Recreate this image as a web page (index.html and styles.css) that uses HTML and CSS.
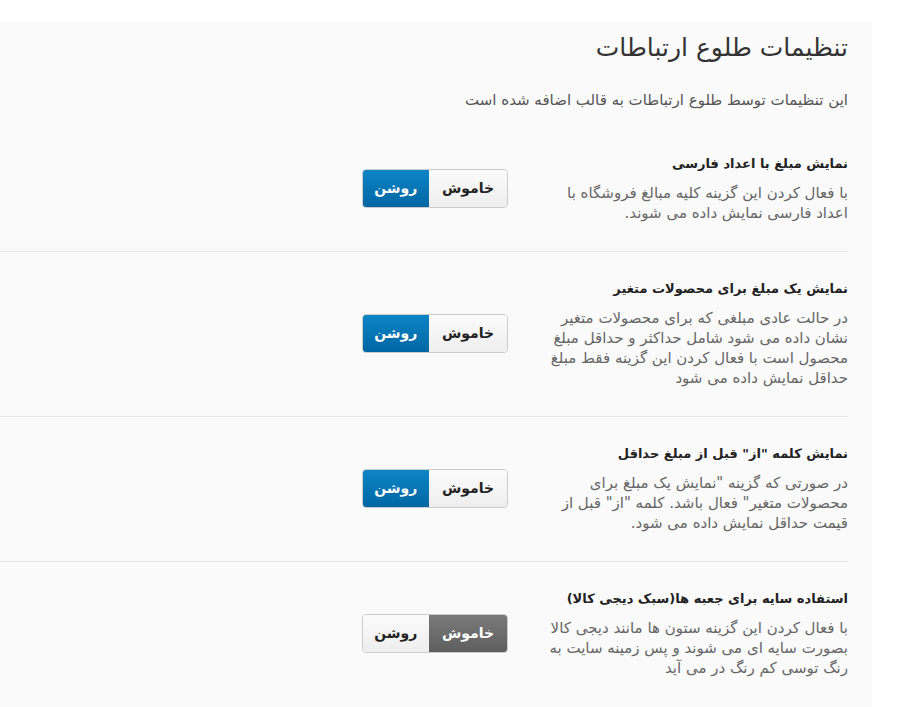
FILE: index.html
```html
<!DOCTYPE html>
<html lang="fa" dir="rtl">
<head>
    <meta charset="UTF-8">
    <meta name="viewport" content="width=device-width, initial-scale=1.0">
    <title>تنظیمات طلوع ارتباطات</title>
    <link rel="stylesheet" href="styles.css">
</head>
<body>
    <div class="panel">
        <h1 class="panel-title">تنظیمات طلوع ارتباطات</h1>
        <p class="panel-desc">این تنظیمات توسط طلوع ارتباطات به قالب اضافه شده است</p>

        <div class="option">
            <div class="option-text">
                <h3>نمایش مبلغ با اعداد فارسی</h3>
                <p>با فعال کردن این گزینه کلیه مبالغ فروشگاه با اعداد فارسی نمایش داده می شوند.</p>
            </div>
            <div class="switch">
                <button class="switch-btn">خاموش</button>
                <button class="switch-btn on">روشن</button>
            </div>
        </div>

        <div class="option">
            <div class="option-text">
                <h3>نمایش یک مبلغ برای محصولات متغیر</h3>
                <p>در حالت عادی مبلغی که برای محصولات متغیر نشان داده می شود شامل حداکثر و حداقل مبلغ محصول است با فعال کردن این گزینه فقط مبلغ حداقل نمایش داده می شود</p>
            </div>
            <div class="switch">
                <button class="switch-btn">خاموش</button>
                <button class="switch-btn on">روشن</button>
            </div>
        </div>

        <div class="option">
            <div class="option-text">
                <h3>نمایش کلمه "از" قبل از مبلغ حداقل</h3>
                <p>در صورتی که گزینه "نمایش یک مبلغ برای محصولات متغیر" فعال باشد. کلمه "از" قبل از قیمت حداقل نمایش داده می شود.</p>
            </div>
            <div class="switch">
                <button class="switch-btn">خاموش</button>
                <button class="switch-btn on">روشن</button>
            </div>
        </div>

        <div class="option">
            <div class="option-text">
                <h3>استفاده سایه برای جعبه ها(سبک دیجی کالا)</h3>
                <p>با فعال کردن این گزینه ستون ها مانند دیجی کالا بصورت سایه ای می شوند و پس زمینه سایت به رنگ توسی کم رنگ در می آید</p>
            </div>
            <div class="switch">
                <button class="switch-btn off">خاموش</button>
                <button class="switch-btn">روشن</button>
            </div>
        </div>
    </div>
</body>
</html>
```

FILE: styles.css
```css
body {
    margin: 0;
    background: #fff;
    font-family: "DejaVu Sans", sans-serif;
    color: #333;
}

.panel {
    width: 848px;
    margin: 22px auto 0 0;
    padding: 6px 24px 0 0;
    background: #fafafa;
    min-height: 685px;
}

.panel-title {
    margin: 0;
    font-size: 25px;
    font-weight: normal;
    line-height: 40px;
    color: #333;
}

.panel-desc {
    margin: 22px 0 17px;
    font-size: 15px;
    line-height: 20px;
    color: #555;
}

/* هر گزینه یک ردیف با خط جداکننده */
.option {
    display: flex;
    align-items: center;
    gap: 35px;
    padding: 26px 0 28px;
    border-bottom: 1px solid #e5e5e5;
}
.option:last-child {
    border-bottom: none;
}

.option-text {
    width: 305px;
}
.option-text h3 {
    margin: 0 0 8px;
    font-size: 13px;
    line-height: 22px;
    color: #222;
}
.option-text p {
    margin: 0;
    font-size: 15px;
    line-height: 20px;
    color: #666;
}

.switch {
    display: flex;
    height: 39px;
    border: 1px solid #ccc;
    border-radius: 4px;
    overflow: hidden;
    box-sizing: border-box;
}
.switch-btn {
    border: none;
    margin: 0;
    padding: 0 13px;
    font-family: "DejaVu Sans", sans-serif;
    font-size: 14px;
    font-weight: bold;
    color: #222;
    background: linear-gradient(#fbfbfb, #eeeeee);
    cursor: pointer;
}
.switch-btn:last-child {
    padding: 0 11.5px;
}
.switch-btn.on {
    color: #fff;
    background: linear-gradient(#0d85c6, #0066a3);
}
.switch-btn.off {
    color: #fff;
    background: linear-gradient(#7a7a7a, #5e5e5e);
}
```
